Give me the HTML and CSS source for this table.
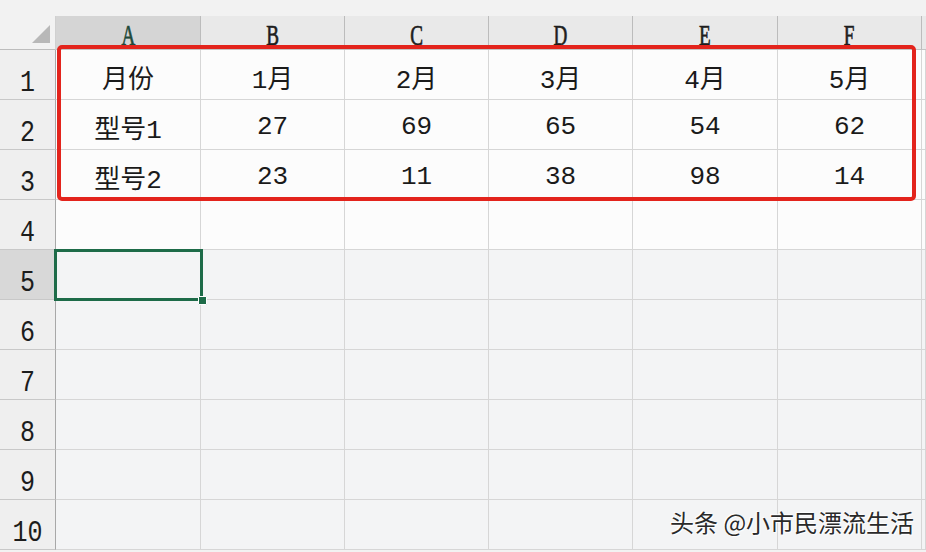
FILE: index.html
```html
<!DOCTYPE html>
<html lang="zh-CN">
<head>
<meta charset="utf-8">
<title>Sheet</title>
<link rel="stylesheet" href="styles.css">
</head>
<body>
<div class="topband"></div>
<div class="wrap">
  <div class="sheet">
    <div class="corner"><span class="tri"></span></div>
    <div class="colh sel"><span class="lt">A</span></div>
    <div class="colh"><span class="lt">B</span></div>
    <div class="colh"><span class="lt">C</span></div>
    <div class="colh"><span class="lt">D</span></div>
    <div class="colh"><span class="lt">E</span></div>
    <div class="colh"><span class="lt">F</span></div>
    <div class="colh last"></div>

    <div class="rowh"><span class="rn">1</span></div>
    <div class="cell">月份</div><div class="cell">1月</div><div class="cell">2月</div><div class="cell">3月</div><div class="cell">4月</div><div class="cell">5月</div><div class="cell"></div>

    <div class="rowh"><span class="rn">2</span></div>
    <div class="cell">型号1</div><div class="cell">27</div><div class="cell">69</div><div class="cell">65</div><div class="cell">54</div><div class="cell">62</div><div class="cell"></div>

    <div class="rowh"><span class="rn">3</span></div>
    <div class="cell">型号2</div><div class="cell">23</div><div class="cell">11</div><div class="cell">38</div><div class="cell">98</div><div class="cell">14</div><div class="cell"></div>

    <div class="rowh"><span class="rn">4</span></div>
    <div class="cell"></div><div class="cell"></div><div class="cell"></div><div class="cell"></div><div class="cell"></div><div class="cell"></div><div class="cell"></div>

    <div class="rowh sel"><span class="rn">5</span></div>
    <div class="cell lo"></div><div class="cell lo"></div><div class="cell lo"></div><div class="cell lo"></div><div class="cell lo"></div><div class="cell lo"></div><div class="cell lo"></div>

    <div class="rowh"><span class="rn">6</span></div>
    <div class="cell lo"></div><div class="cell lo"></div><div class="cell lo"></div><div class="cell lo"></div><div class="cell lo"></div><div class="cell lo"></div><div class="cell lo"></div>

    <div class="rowh"><span class="rn">7</span></div>
    <div class="cell lo"></div><div class="cell lo"></div><div class="cell lo"></div><div class="cell lo"></div><div class="cell lo"></div><div class="cell lo"></div><div class="cell lo"></div>

    <div class="rowh"><span class="rn">8</span></div>
    <div class="cell lo"></div><div class="cell lo"></div><div class="cell lo"></div><div class="cell lo"></div><div class="cell lo"></div><div class="cell lo"></div><div class="cell lo"></div>

    <div class="rowh"><span class="rn">9</span></div>
    <div class="cell lo"></div><div class="cell lo"></div><div class="cell lo"></div><div class="cell lo"></div><div class="cell lo"></div><div class="cell lo"></div><div class="cell lo"></div>

    <div class="rowh"><span class="rn">10</span></div>
    <div class="cell lo"></div><div class="cell lo"></div><div class="cell lo"></div><div class="cell lo"></div><div class="cell lo"></div><div class="cell lo"></div><div class="cell lo"></div>
  </div>

  <div class="redbox"></div>
  <div class="active"><span class="handle"></span></div>
  <div class="watermark">头条 @小市民漂流生活</div>
</div>
</body>
</html>
```

FILE: styles.css
```css
* { box-sizing: border-box; }
html, body {
  margin: 0;
  padding: 0;
  background: #f2f2f2;
  overflow: hidden;
}
.topband {
  height: 16px;
  background: #f2f2f2;
}
.wrap {
  position: relative;
}
.sheet {
  display: grid;
  grid-template-columns: 56px 145px 144px 144px 144px 145px 144px 1fr;
  grid-template-rows: 34px repeat(10, 50px);
}
.corner {
  background: #f2f2f2;
  border-bottom: 1px solid #bdbdbd;
  border-right: 1px solid #d0d0d0;
  position: relative;
}
.tri {
  position: absolute;
  left: 32px;
  top: 9px;
  width: 0;
  height: 0;
  border-left: 18px solid transparent;
  border-bottom: 18px solid #b8b8b8;
}
.colh {
  background: #e9e9e9;
  border-right: 1px solid #bcbcbc;
  border-bottom: 1px solid #c4c4c4;
  display: flex;
  align-items: flex-end;
  justify-content: center;
  padding-bottom: 4px;
  color: #1e1e1e;
}
.colh.sel {
  background: #d5d5d5;
  color: #1f4a3a;
}
.colh.last {
  border-right: none;
}
.lt {
  display: inline-block;
  font-family: "Liberation Serif", "DejaVu Serif", serif;
  font-size: 29px;
  line-height: 20px;
  transform: scaleX(0.66);
  transform-origin: 50% 100%;
  -webkit-text-stroke: 0.7px currentColor;
}
.rowh {
  background: #efefef;
  border-right: 1px solid #a8a8a8;
  border-bottom: 1px solid #c8c8c8;
  display: flex;
  align-items: flex-end;
  justify-content: center;
  padding-bottom: 5px;
  color: #1c1c1c;
}
.rn {
  display: inline-block;
  font-family: "Liberation Mono", "DejaVu Sans Mono", monospace;
  font-size: 25px;
  line-height: 18px;
  transform: scaleY(1.15);
  transform-origin: 50% 100%;
}
.rowh.sel {
  background: #d8d8d8;
}
.cell {
  background: #fcfcfc;
  border-right: 1px solid #d6d6d6;
  border-bottom: 1px solid #d6d6d6;
  display: flex;
  align-items: center;
  justify-content: center;
  padding-top: 4px;
  font-family: "Liberation Mono", "Noto Sans CJK SC", sans-serif;
  font-size: 26px;
  color: #1a1a1a;
}
.cell.lo {
  background: #f3f4f5;
}
.redbox {
  position: absolute;
  left: 57px;
  top: 29px;
  width: 859px;
  height: 156px;
  border: 4px solid #e3241c;
  border-radius: 5px;
  pointer-events: none;
}
.active {
  position: absolute;
  left: 54px;
  top: 233px;
  width: 149px;
  height: 52px;
  border: 3px solid #1d6b48;
}
.handle {
  position: absolute;
  right: -7px;
  bottom: -7px;
  width: 9px;
  height: 9px;
  background: #1d6b48;
  border: 1px solid #ffffff;
  border-radius: 1px;
}
.watermark {
  position: absolute;
  left: 670px;
  top: 491px;
  font-family: "Noto Sans CJK SC", sans-serif;
  font-size: 24px;
  line-height: 30px;
  color: #2a2a2a;
  white-space: nowrap;
  text-shadow: 1px 1px 1px #ffffff, -1px -1px 1px #ffffff;
}
```
